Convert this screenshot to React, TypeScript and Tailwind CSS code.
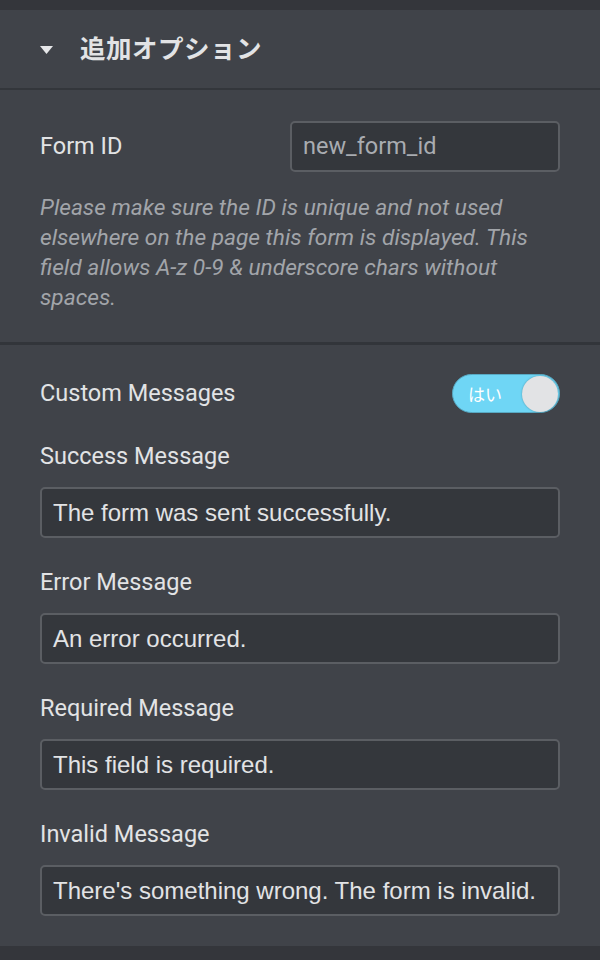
import React from 'react';

const messages = [
  { label: 'Success Message', value: 'The form was sent successfully.' },
  { label: 'Error Message', value: 'An error occurred.' },
  { label: 'Required Message', value: 'This field is required.' },
  { label: 'Invalid Message', value: "There's something wrong. The form is invalid." },
];

const roboto = { fontFamily: 'Roboto, "Noto Sans CJK JP", sans-serif' };

const App = () => {
  return (
    <div className="w-[600px] h-[960px] bg-[#34363b] pt-[10px] overflow-hidden" style={roboto}>
      {/* Section header */}
      <div className="h-[80px] flex items-center bg-[#404349] border-b-2 border-[#33363b]">
        <svg width="13" height="8" viewBox="0 0 13 8" className="ml-[40px] mt-[2px]">
          <path d="M0 0 H13 L6.5 8 Z" fill="#e6e7e9" />
        </svg>
        <span className="ml-[27px] text-[25.5px] font-bold text-[#e2e3e5] tracking-[0.5px]">
          追加オプション
        </span>
      </div>

      {/* Form ID */}
      <div className="bg-[#404349] px-[40px] pt-[31px] pb-[29px] border-b-[3px] border-[#32353a]">
        <div className="flex items-center justify-between">
          <span className="text-[23.5px] text-[#e2e3e5]">Form ID</span>
          <div className="w-[270px] h-[51px] rounded-[5px] border-2 border-[#5b5e63] bg-[#34373c] flex items-center px-[11px]">
            <span className="text-[23.5px] text-[#a9acb1]">new_form_id</span>
          </div>
        </div>
        <p className="mt-[21px] text-[22.7px] leading-[30px] italic text-[#a2a5aa] pr-[30px]">
          Please make sure the ID is unique and not used elsewhere on the page this form is displayed. This field allows A-z 0-9 &amp; underscore chars without spaces.
        </p>
      </div>

      {/* Custom messages */}
      <div className="bg-[#404349] px-[40px] pt-[29px] pb-[30px]">
        <div className="flex items-center justify-between">
          <span className="text-[23.5px] text-[#e2e3e5]">Custom Messages</span>
          <div className="w-[108px] h-[39px] rounded-full bg-[#6fd6f5] border border-[#58a9c3] flex items-center justify-between pl-[15px] pr-[1px]">
            <span className="text-[17px] text-white" style={{ fontFamily: '"Noto Sans CJK JP", sans-serif' }}>はい</span>
            <span className="w-[36px] h-[36px] rounded-full bg-[#e2e3e5] shadow-[0_0_2px_rgba(0,0,0,0.3)]" />
          </div>
        </div>
        {messages.map((m, i) => (
          <div key={m.label} className={i === 0 ? 'mt-[28px]' : 'mt-[29px]'}>
            <div className="text-[23.5px] leading-[30px] text-[#e2e3e5]">{m.label}</div>
            <div className="mt-[16px] h-[51px] rounded-[5px] border-2 border-[#5b5e63] bg-[#34373c] flex items-center px-[11px]">
              <span className="text-[24px] text-[#e2e3e5]" style={{ fontFamily: '"Liberation Sans", Arial, sans-serif' }}>
                {m.value}
              </span>
            </div>
          </div>
        ))}
      </div>
    </div>
  );
};

export default App;
